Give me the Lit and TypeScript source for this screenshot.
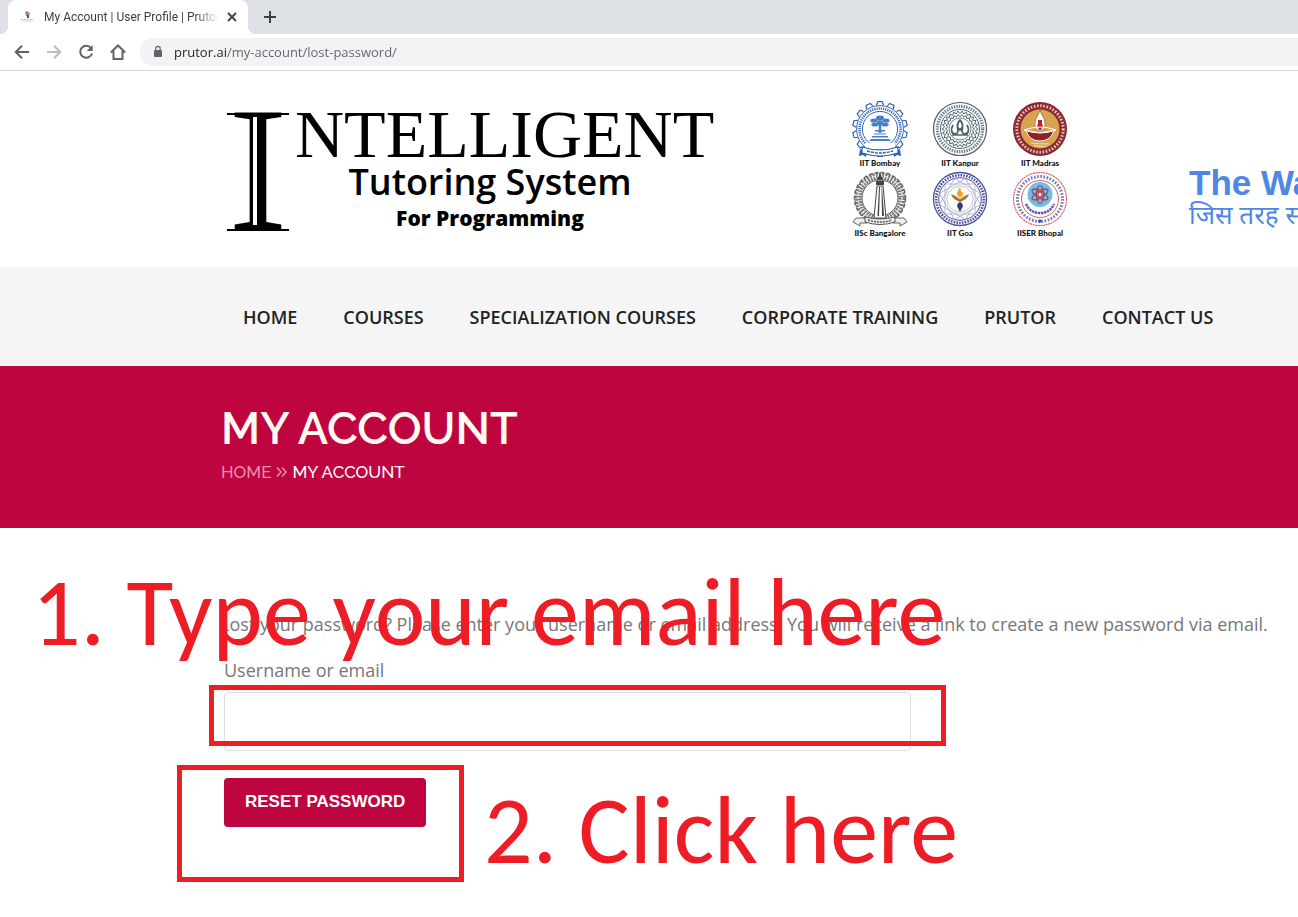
import { LitElement, html, css, svg } from "lit";
import { customElement, state } from "lit/decorators.js";

const ring = (n: number, r: number, start = 0) =>
  Array.from({ length: n }, (_, i) => {
    const a = start + (i * 2 * Math.PI) / n;
    return [28 + r * Math.cos(a), 28 + r * Math.sin(a), (a * 180) / Math.PI + 90];
  });

const star = (n: number, outer: number, inner: number) =>
  ring(n * 2, 1)
    .map((_, i) => {
      const a = (i * Math.PI) / n;
      const r = i % 2 ? inner : outer;
      return `${(28 + r * Math.cos(a)).toFixed(2)},${(28 + r * Math.sin(a)).toFixed(2)}`;
    })
    .join(" ");

const bombay = svg`
  <g fill="none" stroke="#2f62b4">
    ${ring(14, 25.5, Math.PI / 14).map(([x, y, a]) => svg`
      <path d="M-3.5 1.8L-2.3-1.8H2.3L3.5 1.8" stroke-width="1.2" fill="#fff" transform="translate(${x} ${y}) rotate(${a})"/>`)}
    <circle cx="28" cy="28" r="23.4" stroke-width="1"/>
    <circle cx="28" cy="28" r="20.5" stroke-width="2.4" stroke-dasharray="1.2 1"/>
    <circle cx="28" cy="28" r="17.6" stroke-width="1"/>
  </g>
  <path d="M13 42h30v6H13z" fill="#fff"/>
  <g fill="#4a7cc6">
    <ellipse cx="28" cy="17" rx="4" ry="2.4"/><ellipse cx="22" cy="19.5" rx="3.6" ry="2"/>
    <ellipse cx="34" cy="19.5" rx="3.6" ry="2"/><ellipse cx="23" cy="23.500" rx="3.6" ry="2"/>
    <ellipse cx="33" cy="23.500" rx="3.6" ry="2"/><ellipse cx="28" cy="21.500" rx="3" ry="2.2"/>
    <path d="M26.7 22h2.6v10h-2.6zM23 29h10v1.5H23zM19 38h18l2 2H17zM22 32.500h12v1H22zM20 35h16v1.500H20z"/>
  </g>
  <path d="M8 48l-1 7 4-1 3 2 1-5M48 48l1 7-4-1-3 2-1-5" fill="#2f62b4"/>
  <path d="M10 46q18 6 36 0v6q-18 6-36 0z" fill="#fff" stroke="#2f62b4" stroke-width="1.2"/>
  <path d="M15 50q13 4 26 0" fill="none" stroke="#2f62b4" stroke-width="1.500" stroke-dasharray="3 1"/>`;

const kanpur = svg`
  <g fill="none" stroke="#49616d">
    <circle cx="28" cy="28" r="26.5" stroke-width="1.2"/>
    <circle cx="28" cy="28" r="22.7" stroke-width="3.2" stroke-dasharray="1.4 1.1" opacity=".8"/>
    <circle cx="28" cy="28" r="19.500" stroke-width="1"/>
    <polygon points="${star(26, 18, 15.500)}" stroke-width="1"/>
    <polygon points="${star(22, 14.500, 12.500)}" stroke-width="1"/>
    <circle cx="28" cy="28" r="11" stroke-width=".8"/>
    <path d="M21 24c-3 5-1 9 2 9s4-4 2-7M35 24c3 5 1 9-2 9s-4-4-2-7M28 19c-4 5-3 7 0 10 3-3 4-5 0-10z" stroke-width="1.800"/>
    <path d="M20 34h16" stroke-width="1.500"/>
  </g>`;

const madras = svg`
  <circle cx="28" cy="28" r="27" fill="#8b2730"/>
  <circle cx="28" cy="28" r="23.2" fill="none" stroke="#e6c3b8" stroke-width="3" stroke-dasharray="1.600 1.600"/>
  <circle cx="28" cy="28" r="19.500" fill="#d6a351"/>
  <path d="M28 9c-2 7-5 8-5 14 0 4 2 7 5 7s5-3 5-7c0-6-3-7-5-14z" fill="#fff" stroke="#8b4a30" stroke-width=".6"/>
  <path d="M26 19h4v4l1 2-2 4h-2l-2-4 1-2z" fill="#c11f2a"/>
  <path d="M14 29q14 5 28 0-3 11-14 11T14 29z" fill="#8f2226" stroke="#fff" stroke-width=".9"/>
  <path d="M12 29q16-6 32 0-16 6-32 0z" fill="none" stroke="#fff" stroke-width="1"/>
  <path d="M19 42q8 1 18 1M22 44.500q6 1 12 1" stroke="#f6e2bd" stroke-width="1" fill="none"/>`;

const bangalore = svg`
  <g fill="none" stroke="#777">
    <circle cx="28" cy="27" r="22" stroke-width="7" stroke-dasharray="2 1"/>
    <circle cx="28" cy="27" r="25.500" stroke="#666" stroke-width="1.500" stroke-dasharray="4 2"/>
    <circle cx="28" cy="27" r="22" stroke="#ddd" stroke-width="1.500" stroke-dasharray="2 2"/>
    <circle cx="28" cy="27" r="18" stroke="#555" stroke-width="1"/>
  </g>
  <path d="M25 15h6l3 32H22z" fill="#fff" stroke="#444"/>
  <path d="M27 16h1l-1 29h-1.500zM29.500 16h.5l2 29h-2z" fill="#444"/>
  <path d="M24 10h8v4h-8zM28 2l3 7h-6z" fill="#444"/>
  <path d="M1 51l3-4h11v5H8v3zM55 51l-3-4H41v5h7v3z" fill="#eee" stroke="#555" stroke-width=".9"/>
  <path d="M13 46q15 4 30 0v5q-15 5-30 0z" fill="#eee" stroke="#555"/>
  <path d="M16 49q12 4 24 0" fill="none" stroke="#555" stroke-width="1.500" stroke-dasharray="2 1"/>`;

const goa = svg`
  <g fill="none" stroke="#4a4f9c">
    <circle cx="28" cy="28" r="26.500" stroke-width="1.300"/>
    <circle cx="28" cy="28" r="23.800" stroke-width="2.600" stroke-dasharray="1.600 1.200"/>
    <circle cx="28" cy="28" r="21.300" stroke-width="1"/>
    ${[0, 30, 60].map((a) => svg`
      <rect x="13" y="13" width="30" height="30" stroke="#9aa0bf" stroke-width=".7" transform="rotate(${a} 28 28)"/>`)}
    <circle cx="28" cy="28" r="13" stroke="#a7abc6" stroke-width=".7"/>
  </g>
  <path d="M28 16c-1 3-3 4-3 7 0 2 1.500 3 3 3s3-1 3-3c0-1-.5-2-1-2.500-.5.5-.7.800-1 1 .2-2-.5-4-1-5.500z" fill="#f6a31c"/>
  <path d="M19 23q6 2 9 5 3-3 9-5-1 5-7 7l-2 3-2-3q-6-2-7-7z" fill="#a77a42"/>
  <path d="M26 32h4l1 3-3 6-3-6z" fill="#273c91"/>`;

const bhopal = svg`
  <g fill="none">
    <circle cx="28" cy="28" r="26.500" stroke="#d8606b" stroke-width="1.200" stroke-dasharray="2 .600"/>
    <circle cx="28" cy="28" r="22.500" stroke="#777bb5" stroke-width="3" stroke-dasharray="1.700 1.500"/>
    <circle cx="28" cy="28" r="18.500" stroke="#d8606b" stroke-width="1"/>
    <path d="M14 33q4 9 14 9t14-9" stroke="#5457a5" stroke-width="2.500" stroke-dasharray="2.400 .700"/>
  </g>
  <circle cx="28" cy="23.500" r="12.500" fill="#6ebfe8"/>
  <g fill="none" stroke="#bd3241" stroke-width="1.200">
    ${[0, 60, 120].map((a) => svg`<ellipse cx="28" cy="23.500" rx="3.500" ry="9" transform="rotate(${a} 28 23.500)"/>`)}
  </g>
  <circle cx="28" cy="23.500" r="2" fill="#fff" stroke="#bd3241"/>
  <path d="M26 50l2-2 2 2-2 2z" fill="#34409b"/>`;

const institutes = [
  { name: "IIT Bombay", crest: bombay },
  { name: "IIT Kanpur", crest: kanpur },
  { name: "IIT Madras", crest: madras },
  { name: "IISc Bangalore", crest: bangalore },
  { name: "IIT Goa", crest: goa },
  { name: "IISER Bhopal", crest: bhopal },
];

@customElement("browser-bar")
class BrowserBar extends LitElement {
  static styles = css`
    :host { display: block; font-family: "Open Sans", "Noto Sans", sans-serif; color: #3c4043; }
    button { border: 0; padding: 0; background: none; display: grid; place-items: center; color: #5f6368; }
    svg { display: block; }
    .strip { display: flex; align-items: center; height: 34px; padding-left: 8px; background: #dee1e6; }
    .tab { position: relative; display: flex; align-items: center; box-sizing: border-box; width: 240px; height: 34px; padding: 0 8px 0 12px; border-radius: 8px 8px 0 0; background: #fff; }
    .tab::before, .tab::after { content: ""; position: absolute; bottom: 0; width: 8px; height: 8px; }
    .tab::before { right: 100%; background: radial-gradient(circle at 0 0, transparent 8px, #fff 8px); }
    .tab::after { left: 100%; background: radial-gradient(circle at 100% 0, transparent 8px, #fff 8px); }
    .favicon { flex: none; margin-right: 8px; }
    .title { flex: 1; overflow: hidden; white-space: nowrap; font: 12px/18px Roboto, sans-serif; mask-image: linear-gradient(to right, #000 calc(100% - 24px), transparent); }
    .close { width: 16px; height: 16px; margin-left: 5px; color: #3c4043; }
    .plus { width: 28px; height: 28px; margin-left: 8px; color: #3c4043; }
    .toolbar { display: flex; align-items: center; height: 36px; padding-left: 14px; border-bottom: 1px solid #d5d7da; background: #fff; }
    .nav { width: 16px; height: 16px; margin-right: 16px; }
    .nav:disabled { color: #babcbe; }
    .omnibox { flex: 1; display: flex; align-items: center; gap: 10px; height: 28px; margin-left: -2px; padding-left: 12px; border-radius: 14px 0 0 14px; background: #f1f3f4; }
    .url { flex: 1; min-width: 0; border: 0; padding: 0; outline: 0; font: 13px/20px "Open Sans", "Noto Sans", sans-serif; color: transparent; background: linear-gradient(to right, #202124 53px, #5f6368 53px); background-clip: text; -webkit-background-clip: text; }
  `;

  render() {
    return html`
      <div class="strip">
        <div class="tab">
          <svg class="favicon" width="16" height="16" viewBox="0 0 16 16">
            <path d="M5 3l2-1 3 2-1 3H6z" fill="#b08578"/><path d="M7 6h2v3H7z" fill="#555"/>
            <path d="M1 10.500h13M3 12h10" stroke="#bbb" stroke-dasharray="2 1"/>
          </svg>
          <span class="title">My Account | User Profile | Prutor</span>
          <button class="close" aria-label="Close tab">
            <svg width="16" height="16" viewBox="0 0 16 16"><path d="M4 4l8 8M12 4l-8 8" stroke="currentColor" stroke-width="1.800"/></svg>
          </button>
        </div>
        <button class="plus" aria-label="New tab">
          <svg width="16" height="16" viewBox="0 0 16 16"><path d="M8 2v12M2 8h12" stroke="currentColor" stroke-width="2"/></svg>
        </button>
      </div>
      <div class="toolbar">
        <button class="nav" aria-label="Back">
          <svg width="16" height="16" viewBox="0 0 16 16"><path d="M15 8H2.500M8 1.700L1.700 8 8 14.300" fill="none" stroke="currentColor" stroke-width="2"/></svg>
        </button>
        <button class="nav" aria-label="Forward" disabled>
          <svg width="16" height="16" viewBox="0 0 16 16"><path d="M1 8h12.500M8 1.700L14.300 8 8 14.300" fill="none" stroke="currentColor" stroke-width="2"/></svg>
        </button>
        <button class="nav" aria-label="Reload">
          <svg width="16" height="16" viewBox="0 0 16 16"><path d="M13 4a6 6 0 1 0 1 5.500" fill="none" stroke="currentColor" stroke-width="2"/><path d="M14.700 1v6h-6z" fill="currentColor"/></svg>
        </button>
        <button class="nav" aria-label="Home">
          <svg width="16" height="16" viewBox="0 0 16 16"><path d="M.8 8.500L8 1.500l7.200 7M3.500 7v8h9V7" fill="none" stroke="currentColor" stroke-width="2"/></svg>
        </button>
        <div class="omnibox">
          <svg width="12" height="14" viewBox="0 0 12 14"><rect x="2" y="5" width="8" height="7" rx="1" fill="#5f6368"/><path d="M3.800 5.500V3.500a2.200 2.200 0 0 1 4.400 0v2" fill="none" stroke="#5f6368" stroke-width="1.200"/></svg>
          <input class="url" type="text" aria-label="Address" value="prutor.ai/my-account/lost-password/">
        </div>
      </div>`;
  }
}

@customElement("site-header")
class SiteHeader extends LitElement {
  static styles = css`
    :host { display: block; overflow: hidden; }
    .top { display: flex; height: 196px; padding-left: 225px; background: #fff; }
    .logo { flex: none; display: flex; width: 464px; margin-right: 151px; padding-top: 27px; box-sizing: border-box; color: #000; }
    .initial { flex: none; position: relative; width: 66px; text-align: center; font: 178px/142px "Liberation Serif", serif; }
    .initial::before { content: ""; position: absolute; left: 2px; right: 2px; top: 15px; height: 114px; border: solid #000; border-width: 2px 0; }
    .initial::after { content: ""; position: absolute; left: 28px; top: 19px; width: 4px; height: 108px; background: #fff; }
    .words { flex: 1; min-width: 0; display: flex; flex-direction: column; align-items: center; white-space: nowrap; }
    .big { align-self: flex-start; margin-left: 4px; font: 68px/72px "Liberation Serif", serif; }
    .mid { font: 600 36px/24px "Open Sans", sans-serif; }
    .small { font: 800 21px/48px "Open Sans", sans-serif; }
    .partners { flex: none; display: grid; grid-template-columns: repeat(3, 80px); grid-auto-rows: 70px; margin: 0; padding: 30px 0 0; list-style: none; }
    .partner { display: flex; flex-direction: column; align-items: center; font: 900 8px/12px Lato, sans-serif; color: #111; }
    .slogan { margin-left: 109px; padding-top: 94px; white-space: nowrap; color: #4f87e5; }
    .en { font: bold 35px/36px "Liberation Sans", sans-serif; }
    .hi { font: 26px/34px "Noto Sans Devanagari", "Noto Sans", sans-serif; }
    .menu { display: flex; align-items: center; gap: 46px; height: 99px; padding-left: 243px; background: #f5f5f5; }
    .menu a { font: 600 18px/28px "Open Sans", sans-serif; color: #222; text-decoration: none; white-space: nowrap; }
  `;

  items = ["HOME", "COURSES", "SPECIALIZATION COURSES", "CORPORATE TRAINING", "PRUTOR", "CONTACT US"];

  render() {
    return html`
      <div class="top">
        <div class="logo">
          <span class="initial">I</span>
          <div class="words">
            <span class="big">NTELLIGENT</span>
            <span class="mid">Tutoring System</span>
            <span class="small">For Programming</span>
          </div>
        </div>
        <ul class="partners">
          ${institutes.map((i) => html`
            <li class="partner">
              <svg width="56" height="56" viewBox="0 0 56 56">${i.crest}</svg>
              <span>${i.name}</span>
            </li>`)}
        </ul>
        <div class="slogan">
          <div class="en">The Wa</div>
          <div class="hi" lang="hi">जिस तरह स</div>
        </div>
      </div>
      <nav class="menu">${this.items.map((t) => html`<a href="#">${t}</a>`)}</nav>`;
  }
}

@customElement("app-root")
class AppRoot extends LitElement {
  static styles = css`
    :host { display: block; overflow: hidden; min-height: 100vh; background: #fff; font-family: "Open Sans", "Noto Sans", sans-serif; }
    .banner { box-sizing: border-box; height: 162px; padding: 36px 0 0 221px; background: #bf0540; color: #fff; font-family: Raleway, Lato, sans-serif; }
    h1 { margin: 0; font-size: 45px; line-height: 54px; font-weight: 600; color: #fffaf0; }
    .crumbs { display: flex; align-items: center; gap: 5px; font-size: 17px; line-height: 32px; font-weight: 500; }
    .crumbs a { color: #e58fac; text-decoration: none; }
    .crumbs svg { display: block; }
    .content { position: relative; padding: 80px 0 90px 220px; color: #777; font-size: 18px; line-height: 32px; }
    .intro { margin: 0 0 14px; white-space: nowrap; }
    form { display: flex; flex-direction: column; align-items: flex-start; padding-left: 4px; }
    .field { box-sizing: border-box; width: 687px; max-width: 100%; height: 59px; margin: 6px 0 27px; padding: 0 16px; border: 1px solid #ddd; border-radius: 4px; font: inherit; outline: 0; }
    .submit { height: 49px; padding: 0 21px 2px; border: 0; border-radius: 4px; background: #bf0540; color: #fff; font: bold 17px/24px "Liberation Sans", sans-serif; }
    .note { position: absolute; white-space: nowrap; color: #ee1c25; font: 96px/100px Carlito, Lato, sans-serif; pointer-events: none; }
    .frame { position: absolute; box-sizing: border-box; border: 5px solid #ee1c25; pointer-events: none; }
    .note-type { left: 32px; top: 35px; }
    .note-click { left: 484px; top: 253px; }
    .frame-field { left: 209px; top: 157px; width: 737px; height: 61px; }
    .frame-submit { left: 177px; top: 237px; width: 287px; height: 117px; }
  `;

  @state() private email = "";

  render() {
    return html`
      <browser-bar></browser-bar>
      <site-header></site-header>
      <header class="banner">
        <h1>MY ACCOUNT</h1>
        <div class="crumbs">
          <a href="#">HOME</a>
          <svg width="11" height="12" viewBox="0 0 11 12"><path d="M1 1.500L5 6l-4 4.500M6 1.500L10 6l-4 4.500" fill="none" stroke="#e58fac" stroke-width="1.500"/></svg>
          <span>MY ACCOUNT</span>
        </div>
      </header>
      <main class="content">
        <p class="intro">Lost your password? Please enter your username or email address. You will receive a link to create a new password via email.</p>
        <form @submit=${(e: Event) => e.preventDefault()}>
          <label for="user">Username or email</label>
          <input id="user" class="field" type="text" .value=${this.email}
            @input=${(e: Event) => (this.email = (e.target as HTMLInputElement).value)}>
          <button class="submit" type="submit">RESET PASSWORD</button>
        </form>
        <div class="note note-type">1. Type your email here</div>
        <div class="note note-click">2. Click here</div>
        <div class="frame frame-field"></div>
        <div class="frame frame-submit"></div>
      </main>`;
  }
}
